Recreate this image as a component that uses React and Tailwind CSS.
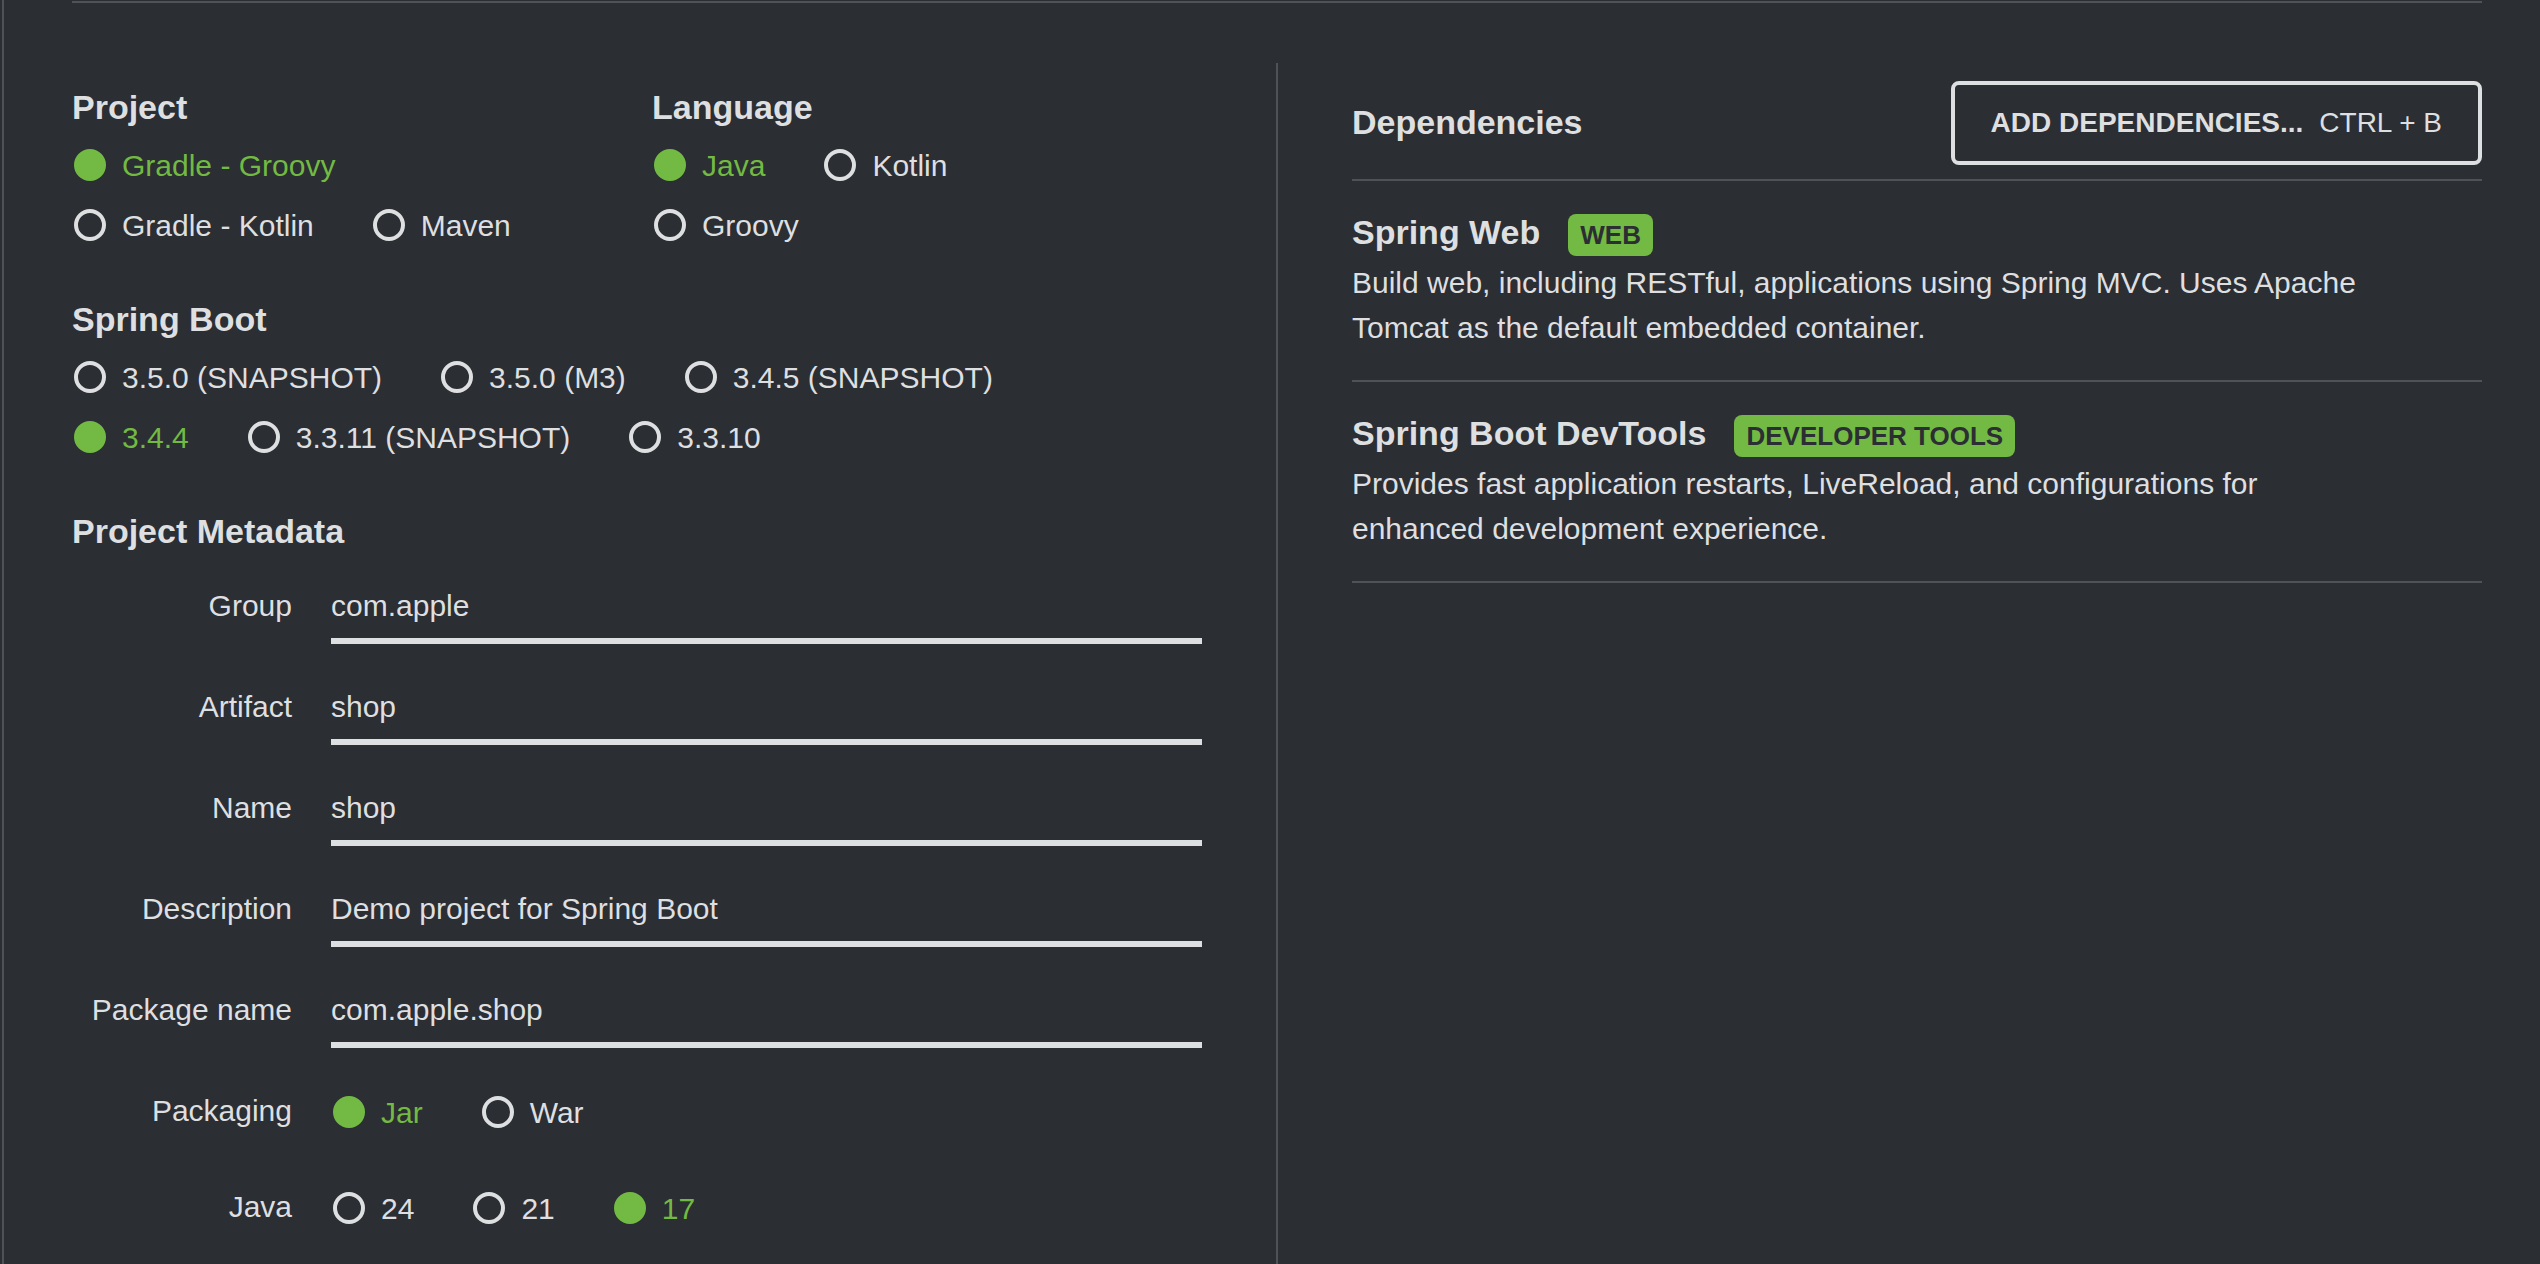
import { useState } from "react";

const METADATA_FIELDS = [
  { id: "group", label: "Group", value: "com.apple" },
  { id: "artifact", label: "Artifact", value: "shop" },
  { id: "name", label: "Name", value: "shop" },
  { id: "description", label: "Description", value: "Demo project for Spring Boot" },
  { id: "package-name", label: "Package name", value: "com.apple.shop" },
];

const DEPENDENCIES = [
  {
    name: "Spring Web",
    tag: "Web",
    description:
      "Build web, including RESTful, applications using Spring MVC. Uses Apache Tomcat as the default embedded container.",
  },
  {
    name: "Spring Boot DevTools",
    tag: "Developer Tools",
    description:
      "Provides fast application restarts, LiveReload, and configurations for enhanced development experience.",
  },
];

function RadioGroup({ name, label, options, initial }) {
  const [selected, setSelected] = useState(initial);
  return (
    <div role="radiogroup" aria-label={label} className="flex flex-wrap">
      {options.map((option) => (
        <label
          key={option}
          className="mr-[57px] ml-0.5 flex h-[60px] cursor-pointer items-center gap-4 has-checked:text-[#72ba43]"
        >
          <input
            type="radio"
            name={name}
            value={option}
            checked={selected === option}
            onChange={() => setSelected(option)}
            className="size-8 shrink-0 appearance-none rounded-full border-4 border-[#dedfe0] checked:border-[#72ba43] checked:bg-[#72ba43]"
          />
          <span className="pt-0.5 leading-[44px] whitespace-nowrap">{option}</span>
        </label>
      ))}
    </div>
  );
}

function Heading({ children }) {
  return <h2 className="pb-0.5 text-[34px] leading-[38px] font-bold">{children}</h2>;
}

function Choice({ title, name, options, initial }) {
  return (
    <section className="flex flex-col gap-[7px]">
      <Heading>{title}</Heading>
      <RadioGroup name={name} label={title} options={options} initial={initial} />
    </section>
  );
}

function TextField({ id, label, value }) {
  return (
    <div className="flex gap-[39px]">
      <label htmlFor={id} className="w-[220px] shrink-0 text-right leading-[64px]">
        {label}
      </label>
      <input
        id={id}
        type="text"
        defaultValue={value}
        className="h-[70px] min-w-0 flex-1 border-b-[6px] border-[#dedfe0] bg-transparent outline-none"
      />
    </div>
  );
}

function RadioField({ label, name, options, initial }) {
  return (
    <div className="flex items-start gap-[39px]">
      <span className="w-[220px] shrink-0 text-right leading-[57px]">{label}</span>
      <RadioGroup name={name} label={label} options={options} initial={initial} />
    </div>
  );
}

function Dependency({ name, tag, description }) {
  return (
    <li className="border-b-2 border-[#505256] pt-[33px] pr-[100px] pb-[30px]">
      <div className="flex items-start gap-7">
        <h3 className="text-[34px] leading-[36px] font-bold">{name}</h3>
        <span className="rounded-lg bg-[#72ba43] px-3 text-[26px] leading-[42px] font-bold text-[#2b2e32] uppercase">
          {tag}
        </span>
      </div>
      <p className="mt-1 leading-[45px]">{description}</p>
    </li>
  );
}

export default function App() {
  return (
    <div className="flex min-h-screen bg-[#2b2e32] pl-0.5 font-['Liberation_Sans',Arial,sans-serif] text-[30px] text-[#dedfe0]">
      <div className="flex flex-1 flex-col border-l-2 border-[#505256] pt-px pr-[58px] pl-[68px]">
        <hr className="mb-[60px] border-t-2 border-[#505256]" />
        <main className="flex flex-1">
          <form className="flex-1 pt-[25px] pr-[74px]">
            <div className="flex flex-col gap-[45px]">
              <div className="grid grid-cols-2 gap-[30px]">
                <Choice
                  title="Project"
                  name="project"
                  options={["Gradle - Groovy", "Gradle - Kotlin", "Maven"]}
                  initial="Gradle - Groovy"
                />
                <Choice
                  title="Language"
                  name="language"
                  options={["Java", "Kotlin", "Groovy"]}
                  initial="Java"
                />
              </div>
              <Choice
                title="Spring Boot"
                name="boot-version"
                options={[
                  "3.5.0 (SNAPSHOT)",
                  "3.5.0 (M3)",
                  "3.4.5 (SNAPSHOT)",
                  "3.4.4",
                  "3.3.11 (SNAPSHOT)",
                  "3.3.10",
                ]}
                initial="3.4.4"
              />
              <section>
                <Heading>Project Metadata</Heading>
                <div className="mt-[22px] flex flex-col gap-[31px]">
                  {METADATA_FIELDS.map((field) => (
                    <TextField key={field.id} {...field} />
                  ))}
                </div>
                <div className="mt-[34px] flex flex-col gap-9">
                  <RadioField label="Packaging" name="packaging" options={["Jar", "War"]} initial="Jar" />
                  <RadioField label="Java" name="java-version" options={["24", "21", "17"]} initial="17" />
                </div>
              </section>
            </div>
          </form>
          <div className="w-0.5 bg-[#505256]" />
          <section className="flex-1 pt-[18px] pl-[74px]">
            <header className="flex items-center justify-between border-b-2 border-[#505256] pb-[14px]">
              <Heading>Dependencies</Heading>
              <button
                type="button"
                className="flex h-[84px] items-center gap-4 rounded-lg border-4 border-[#dedfe0] px-9 text-[28px] uppercase"
              >
                <span className="font-bold">Add dependencies...</span>
                <span>Ctrl + B</span>
              </button>
            </header>
            <ul>
              {DEPENDENCIES.map((dependency) => (
                <Dependency key={dependency.name} {...dependency} />
              ))}
            </ul>
          </section>
        </main>
      </div>
    </div>
  );
}
